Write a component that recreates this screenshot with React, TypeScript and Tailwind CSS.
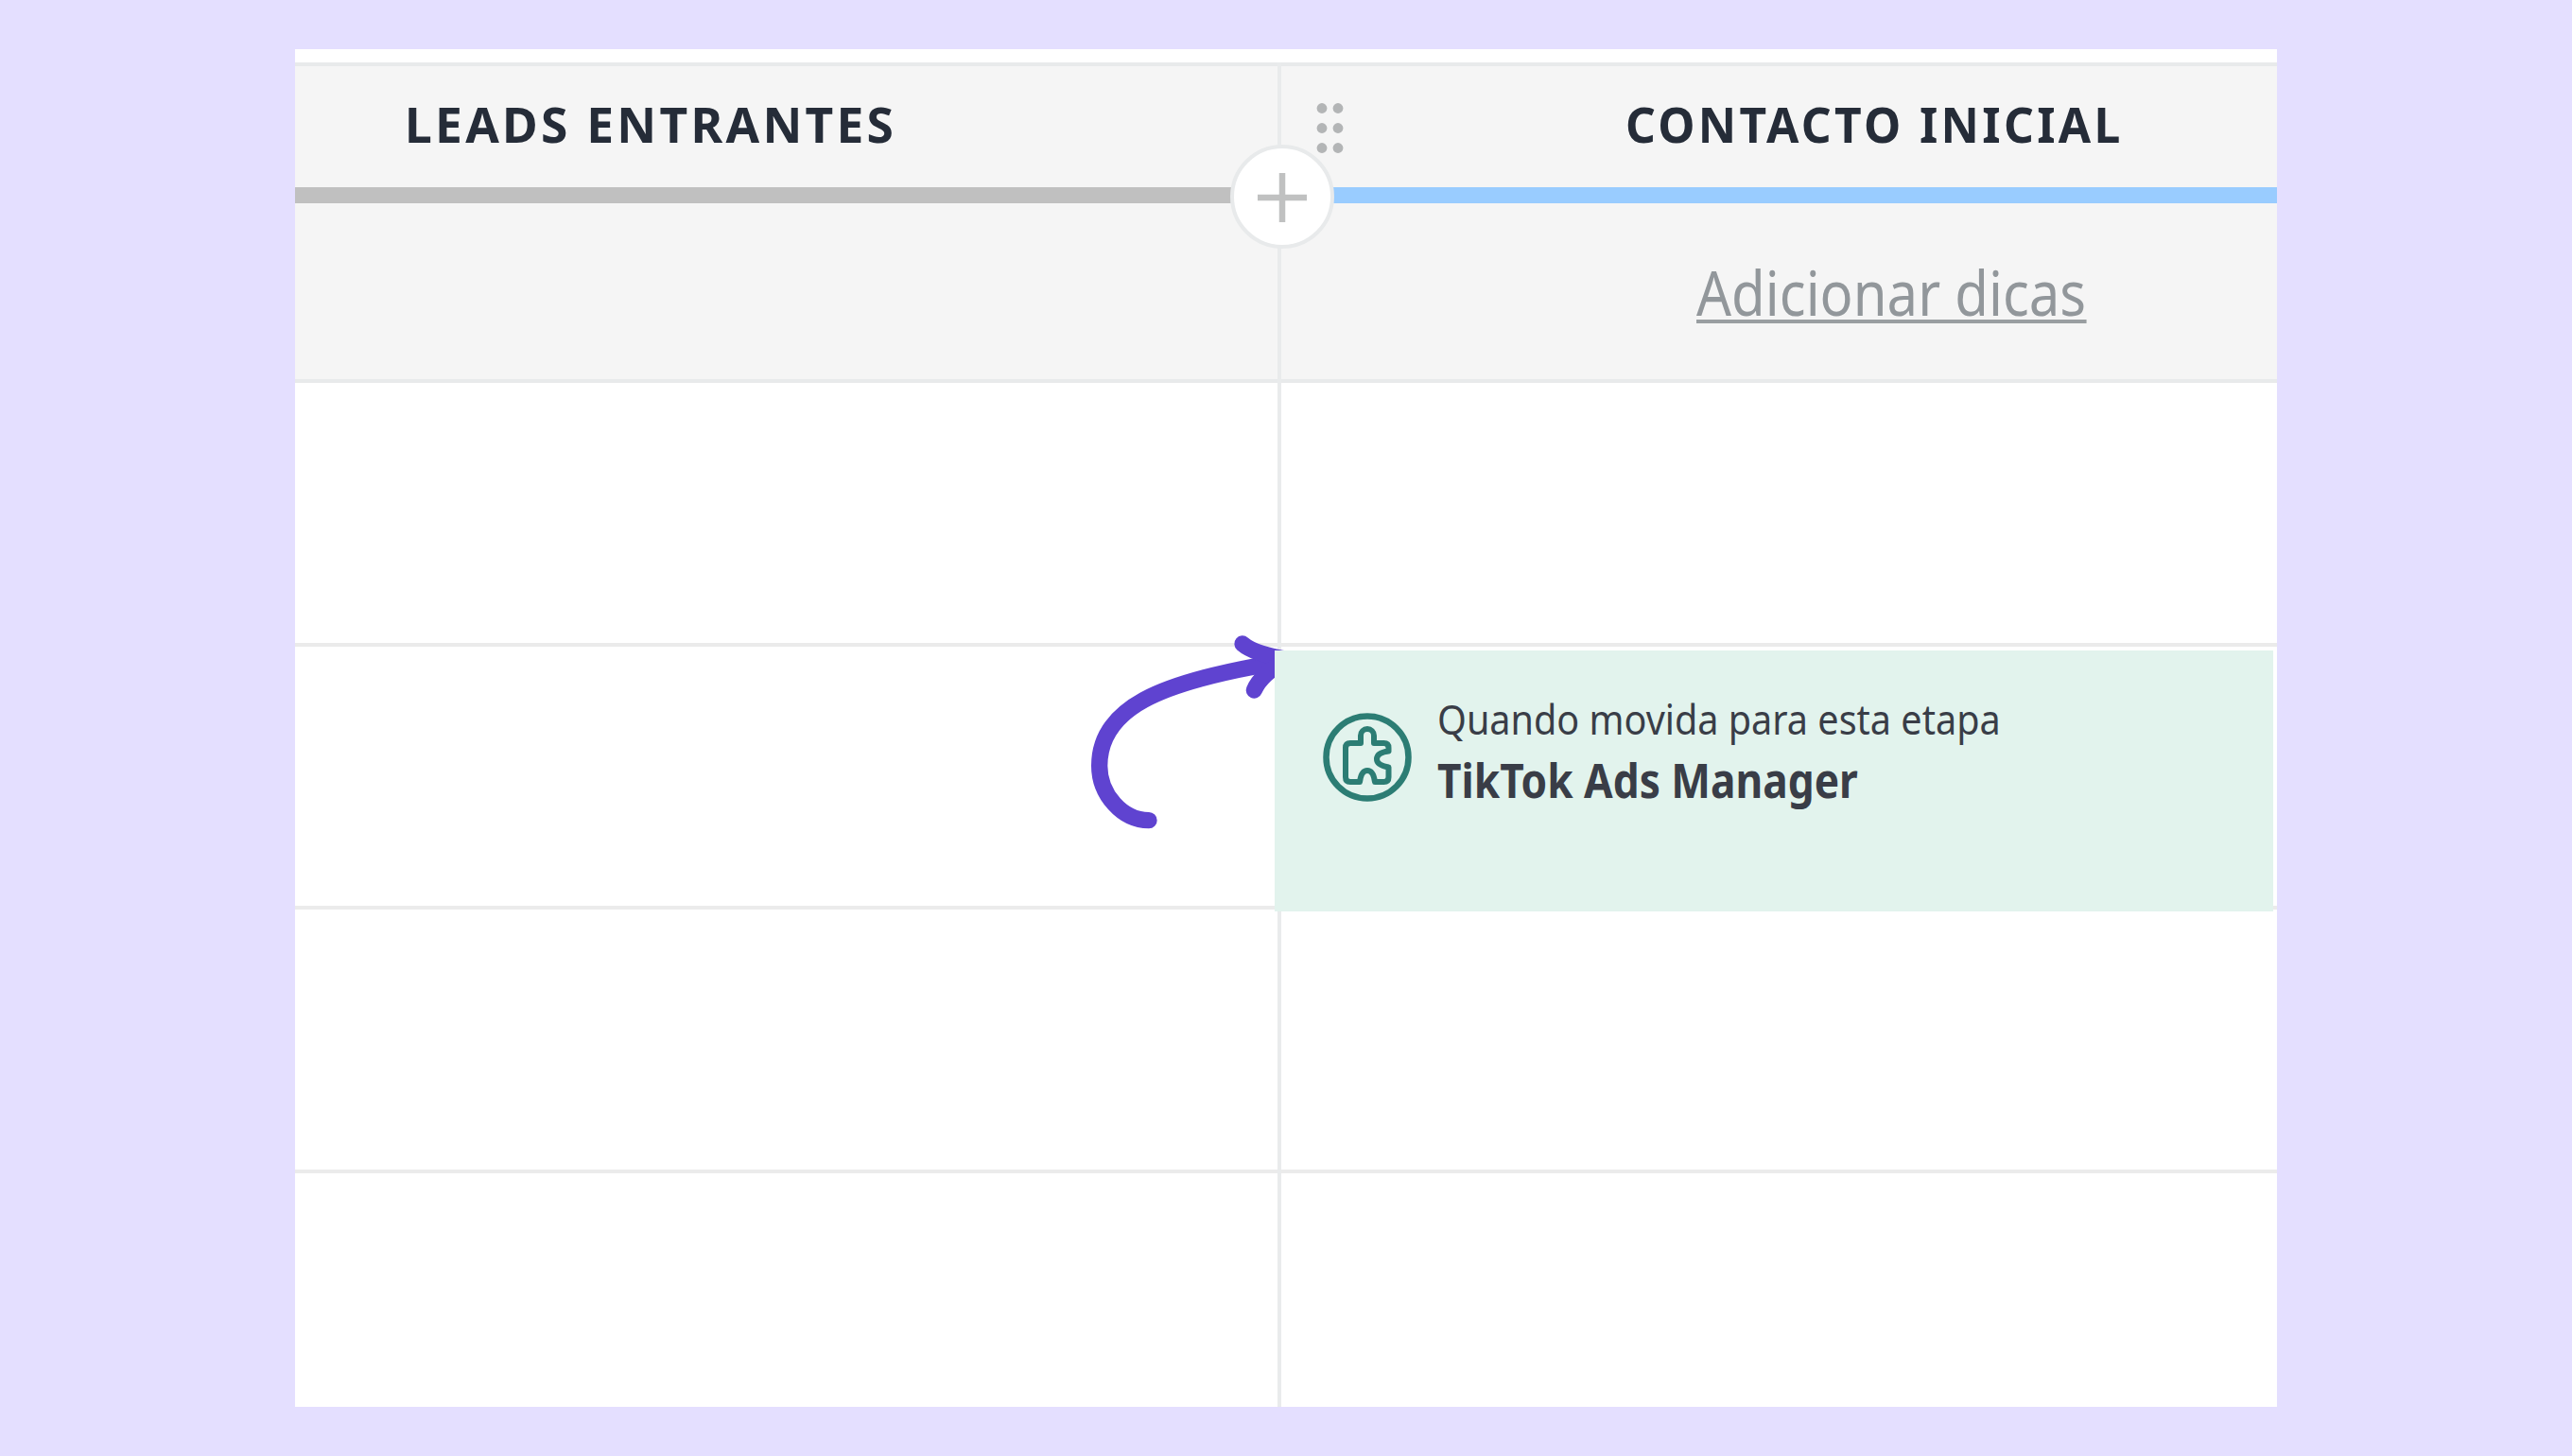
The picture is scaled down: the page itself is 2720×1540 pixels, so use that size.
import type { ReactNode } from "react";

function DragDots() {
  return (
    <svg className="absolute left-[36px] top-[38px]" width="34" height="60" viewBox="0 0 34 60">
      <g fill="#b3b5b6">
        <circle cx="7" cy="6.5" r="5.4" />
        <circle cx="24" cy="6.5" r="5.4" />
        <circle cx="7" cy="27.5" r="5.4" />
        <circle cx="24" cy="27.5" r="5.4" />
        <circle cx="7" cy="48.5" r="5.4" />
        <circle cx="24" cy="48.5" r="5.4" />
      </g>
    </svg>
  );
}

function AddStage() {
  return (
    <button className="absolute left-[989px] top-[101px] flex h-[110px] w-[110px] items-center justify-center rounded-full border-4 border-[#e8eaeb] bg-white">
      <svg width="52" height="52" viewBox="0 0 52 52" className="mt-[1px]">
        <path d="M26 0V52M0 26H52" stroke="#c0c1c1" strokeWidth="6.5" />
      </svg>
    </button>
  );
}

function PuzzleIcon() {
  return (
    <svg width="94" height="94" viewBox="0 0 94 94" fill="none" stroke="#2c7d74">
      <circle cx="47" cy="47" r="43.5" strokeWidth="6.5" />
      <path
        d="M29 32H40V24a7 7 0 0 1 14 0V32H64.500q5 0 5 5v3.500C61 41.500 57 44.500 57 49S61 56 69.500 57.500V68q0 5 -5 5H55C54 65.500 51.500 61 47 61S40 65.500 39 73H29q-5 0 -5 -5V37q0 -5 5 -5Z"
        strokeWidth="6"
        strokeLinejoin="round"
      />
    </svg>
  );
}

function Arrow() {
  return (
    <svg
      className="absolute left-[818px] top-[598px]"
      width="260"
      height="250"
      viewBox="0 0 780 750"
      fill="none"
      stroke="#5f43d0"
      strokeWidth="52"
      strokeLinecap="round"
    >
      <path d="M255 653C170 653 98 570 98 480C98 290 310 218 590 165L680 150" />
      <path d="M552 93Q590 126 700 143" />
      <path d="M589 240Q610 190 690 145" />
    </svg>
  );
}

function Cell({ children }: { children?: ReactNode }) {
  return <div className="h-[278.5px] shrink-0 border-b-4 border-[#ebebeb]">{children}</div>;
}

function App() {
  return (
    <div className="flex h-[1540px] w-[2720px] items-start bg-[#e4dfff] px-[312px] pt-[52px] font-['Noto_Sans',sans-serif]">
      <div className="relative flex h-[1436px] w-[2096px] overflow-hidden bg-white pt-[14px]">
        <section className="flex w-[1043px] flex-col border-r-4 border-[#e9ebec]">
          <header className="h-[339px] border-y-4 border-[#e8eaeb] bg-[#f5f5f5]">
            <div className="flex h-[128px] items-center pb-[6px] pl-[116px]">
              <h2 className="origin-left scale-x-[0.99] whitespace-nowrap text-[52px] leading-none font-bold tracking-[3.3px] text-[#252c38]">
                LEADS ENTRANTES
              </h2>
            </div>
            <div className="h-[17px] bg-[#c0c0c0]" />
          </header>
          <Cell />
          <Cell />
          <Cell />
        </section>

        <section className="flex w-[1053px] flex-col">
          <header className="relative h-[339px] border-y-4 border-[#e8eaeb] bg-[#f5f5f5]">
            <DragDots />
            <div className="flex h-[128px] items-center pb-[6px] pl-[364px]">
              <h2 className="origin-left scale-x-[0.955] whitespace-nowrap text-[52px] leading-none font-bold tracking-[3.5px] text-[#252c38]">
                CONTACTO INICIAL
              </h2>
            </div>
            <div className="h-[17px] bg-[#99ccff]" />
            <div className="pt-[65px] pl-[439px]">
              <a className="inline-block origin-left scale-x-[0.893] border-b-4 border-[#999ea1] whitespace-nowrap text-[65px] leading-[58px] text-[#92979b]">
                Adicionar dicas
              </a>
            </div>
          </header>
          <Cell />
          <Cell />
          <Cell />
        </section>

        <AddStage />
        <Arrow />

        {/* trigger card lies over the cell borders */}
        <div className="absolute left-[1036px] top-[636px] flex h-[276px] w-[1056px] bg-[#e2f3ed] pt-[51px] pl-[51px]">
          <div className="mt-[15px] h-[94px] w-[94px] shrink-0">
            <PuzzleIcon />
          </div>
          <div className="ml-[27px] whitespace-nowrap text-[#393d47]">
            <p className="origin-left scale-x-[0.92] text-[43px] leading-[44px]">
              Quando movida para esta etapa
            </p>
            <p className="mt-[15px] origin-left scale-x-[0.867] text-[51px] leading-[52px] font-bold">
              TikTok Ads Manager
            </p>
          </div>
        </div>
      </div>
    </div>
  );
}

export default App;
